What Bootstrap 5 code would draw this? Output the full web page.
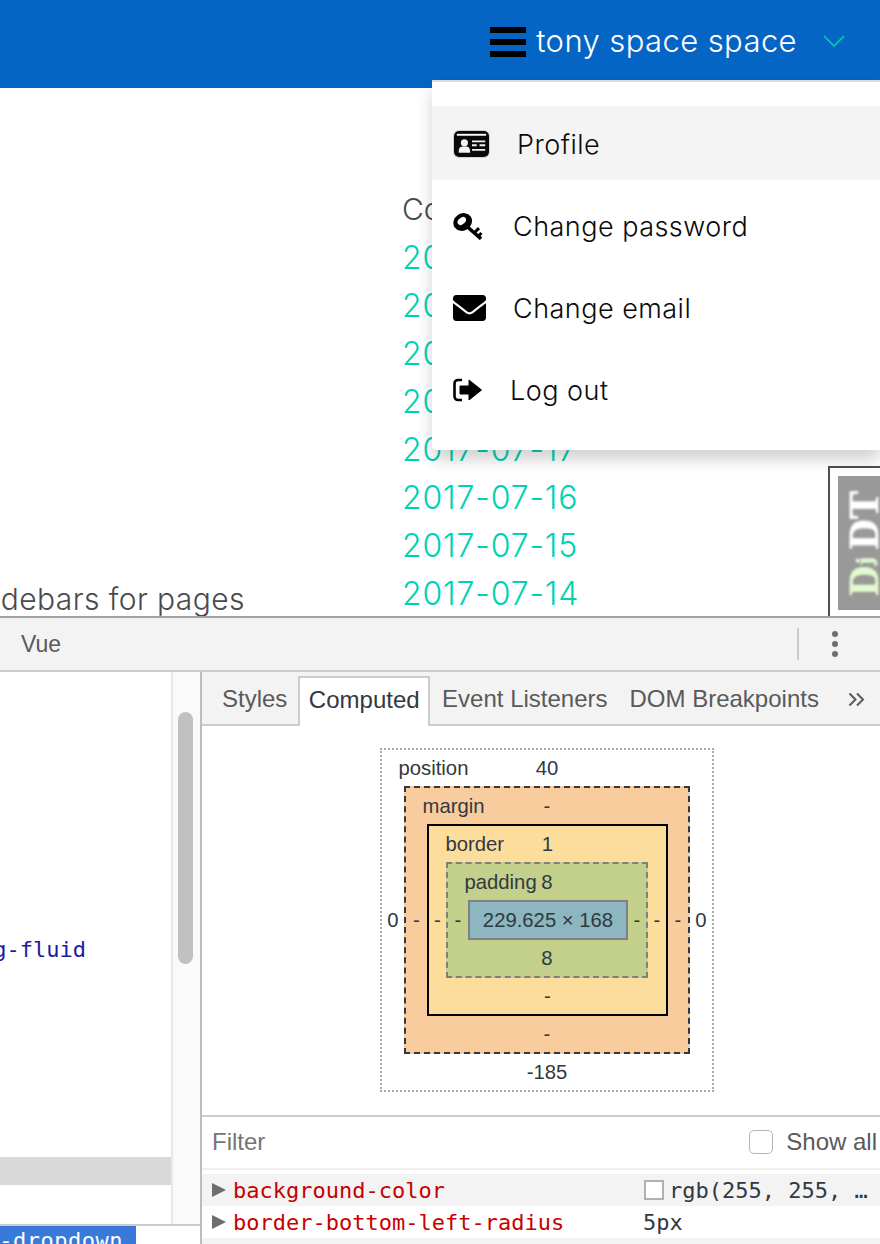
<!DOCTYPE html>
<html lang="en">
<head>
<meta charset="utf-8">
<title>Profile menu and DevTools</title>
<link rel="stylesheet" href="https://cdn.jsdelivr.net/npm/bootstrap@5.3.0/dist/css/bootstrap.min.css">
<style>
html,body{margin:0;height:1244px;overflow:hidden;background:#fff}
body{font-family:"Inter","Liberation Sans",sans-serif}
.shot{height:1244px;width:880px;overflow:hidden}
.pagearea{height:616px;position:relative;overflow:hidden;flex:none}
.topbar{height:88px;background:#0565c4;padding:0;flex:none}
.usernav{padding-right:35px;height:82px;padding-top:0}
.burger{width:36px;height:30px;margin-right:10px;margin-top:2px}
.burger i{display:block;height:6px;background:#000}
.uname{color:#fff;font-size:31px;font-weight:300;letter-spacing:.4px;line-height:1;margin-right:26px;margin-bottom:2px}
.chev{width:22px;height:12px;display:block}
.pgbody{height:528px}
.leftcol{width:245px;margin-right:157px;padding-top:487px;flex:none}
.sidetitle{font-size:30px;font-weight:300;line-height:48px;color:#4a4a4a;white-space:nowrap;letter-spacing:.43px}
.datecol{padding-top:97px;font-size:30px;font-weight:300;line-height:48px}
.datecol .cohead{color:#4a4a4a}
.datecol a{display:block;height:48px;padding-top:1px;color:#00d1b2;text-decoration:none;font-size:32px;letter-spacing:.85px;white-space:nowrap}
.usermenu.dropdown-menu{top:80px;right:0;left:auto;width:448px;margin:0;padding:24px 0;border:0;border-top:2px solid #dbdbdb;border-radius:0 0 0 5px;box-shadow:0 10px 16px rgba(0,0,0,.18);height:370px}
.usermenu .dropdown-item{height:74px;padding:4px 0 0 21px;margin-bottom:8px;font-size:27px;font-weight:300;color:#0a0a0a;letter-spacing:.48px}
.usermenu .dropdown-item.cur{background:#f4f4f4}
.mi{display:block;flex:none;margin-top:-2px}
.mi.card{margin-right:27px}
.mi.keyic{margin-right:30px}
.mi.mailic{margin-right:27px}
.mi.outic{margin-right:28px}
.djhandle{position:absolute;left:828px;top:466px;width:80px;height:160px;background:#fff;border:2px solid #4f4f4f;padding:8px}
.djin{background:#999;height:134px;width:70px;overflow:hidden;display:flex;justify-content:flex-start;align-items:flex-start;padding:15px 0 0 5px}
.djtext{writing-mode:vertical-rl;transform:rotate(180deg);font-family:"Liberation Serif",serif;font-weight:700;font-size:42px;line-height:1;color:#fff;filter:blur(.8px);white-space:nowrap;-webkit-text-stroke:.7px currentColor}
.djtext b{color:#e2fbcf}
.djtext b.jj{font-size:24px;letter-spacing:8px}

.devtools{height:628px;border-top:2px solid #a3a3a3;font-family:"Liberation Sans",sans-serif;color:#303942;flex:none}
.dtbar{height:54px;background:#f3f3f3;border-bottom:2px solid #ccc;flex:none;padding-left:21px;font-size:23px;color:#5a5a5a}
.dtsep{width:2px;height:32px;background:#ccc;margin-left:auto;margin-right:32px}
.dtdots{width:8px;margin-right:41px}
.dtdots i{display:block;width:6px;height:6px;border-radius:50%;background:#6e6e6e;margin:2px 1px}
.dtmain{height:572px}
.elpane{width:200px;flex:none;background:#fff}
.elrows{height:552px;flex:none}
.elcode{width:171px;flex:none;font-family:"DejaVu Sans Mono",monospace;font-size:22px;color:#1a1aa6;overflow:hidden;position:relative;padding-top:265px}
.elline{height:26px;line-height:26px;display:flex;justify-content:flex-end;white-space:nowrap;padding-right:85px}
.elsel{height:28px;background:#d9d9d9;margin-top:194px}
.sbar{width:29px;flex:none;background:#fafafa;border-left:2px solid #e8e8e8;padding:40px 7px 0 5px}
.sthumb{height:252px;background:#c1c1c1;border-radius:8px}
.crumbs{height:20px;border-top:2px solid #ccc;flex:none;overflow:hidden;background:#fff}
.crumbsel{width:136px;height:18px;background:#3879d9;color:#fff;font-family:"DejaVu Sans Mono",monospace;font-size:22px;letter-spacing:.5px;line-height:29px;display:flex;justify-content:flex-end;white-space:nowrap;padding-right:13px;overflow:hidden}
.sidepane{width:680px;flex:none;border-left:2px solid #bdbdbd;background:#fff}
.tabsrow{height:54px;background:#f3f3f3;border-bottom:2px solid #ccc;flex:none;font-size:24px;color:#5a5a5a;padding:4px 0 0 0;align-items:stretch}
.dttab{padding:0 11px;display:flex;align-items:center;white-space:nowrap;height:46px}
.dttab.first{padding-left:20px;padding-right:11px}
.dttab.on{background:#fff;color:#303942;border:2px solid #ccc;border-bottom:0;height:50px;padding:0 8.500px 4px;margin-bottom:-2px;margin-right:1px}
.more{margin-left:18px;width:20px;height:46px}
.bmwrap{height:389px;flex:none;padding:22px 0 0 12px}
.bm{display:grid;grid-template-rows:36px auto 36px;font-size:20.3px;color:#303942;line-height:1}
.bmtop{display:grid;grid-template-columns:1fr auto 1fr;align-items:center;grid-column:1/4}
.bmside{display:flex;align-items:center;justify-content:center}
.bmbot{grid-column:1/4;display:flex;align-items:center;justify-content:center}
.bmpos{grid-template-columns:22px 1fr 22px;width:334px;height:344px;border:2px dotted #aaa}
.bmmar{grid-template-columns:21px 1fr 20px;background:#f9cc9d;border:2px dashed #303942}
.bmbor{grid-template-columns:17px 1fr 18px;background:#fddd9b;border:2px solid #000}
.bmpad{grid-template-columns:20px 1fr 18px;background:#c3d08b;border:2px dashed #808080}
.bmcon{background:#8cb6c0;border:2px solid #808080;height:40px;display:flex;align-items:center;justify-content:center;white-space:nowrap}
.bmlab{padding-left:16.500px;white-space:nowrap;text-align:left}
.filterrow{border-top:2px solid #ccc;flex:none;font-size:24px;color:#757575;padding:0 0 2px 10px;border-bottom:2px solid #eee;height:55px}
.fakecheck{width:24px;height:24px;border:1.5px solid #b5b5b5;border-radius:5px;background:#fff;margin-left:auto;margin-right:13px}
.showall{color:#5a5a5a;margin-right:3px;white-space:nowrap}
.proplist{padding-top:4px;font-family:"DejaVu Sans Mono",monospace;font-size:22px;flex:1;overflow:hidden}
.prop{height:32px;align-items:center;white-space:nowrap}
.prop.alt{background:#f3f3f3}
.tri{width:0;height:0;border-left:14px solid #6e6e6e;border-top:7px solid transparent;border-bottom:7px solid transparent;margin-left:10px;margin-right:7px;flex:none}
.pname{color:#c80000;width:410px;flex:none}
.pval{color:#303942;letter-spacing:0}
.swatch{width:20px;height:20px;border:2px solid #b0b0b0;background:#fff;display:inline-block;margin-left:1px;margin-right:5px;flex:none}
</style>
</head>
<body>
<div class="shot d-flex flex-column">
  <div class="pagearea d-flex flex-column">
    <nav class="navbar topbar align-items-start justify-content-end">
      <div class="usernav d-flex align-items-center">
        <span class="burger d-flex flex-column justify-content-between"><i></i><i></i><i></i></span>
        <span class="uname">tony space space</span>
        <svg class="chev" viewBox="0 0 22 12"><path d="M1 1l10 10L21 1" fill="none" stroke="#00d1b2" stroke-width="1.6"/></svg>
      </div>
    </nav>
    <div class="pgbody d-flex">
      <div class="leftcol d-flex justify-content-end"><div class="sidetitle">Sidebars for pages</div></div>
      <div class="datecol">
        <div class="cohead">Contents</div>
        <a href="#">2017-07-21</a>
        <a href="#">2017-07-20</a>
        <a href="#">2017-07-19</a>
        <a href="#">2017-07-18</a>
        <a href="#">2017-07-17</a>
        <a href="#">2017-07-16</a>
        <a href="#">2017-07-15</a>
        <a href="#">2017-07-14</a>
      </div>
    </div>
    <ul class="dropdown-menu show usermenu list-unstyled">
      <li><a class="dropdown-item cur d-flex align-items-center" href="#">
        <svg class="mi card" width="37" height="28" viewBox="0 0 37 28"><rect width="37" height="28" rx="3" fill="#0a0a0a"/><rect x="3" y="3" width="31" height="2" fill="#fff"/><circle cx="11" cy="12.500" r="3.800" fill="#f2f2f2"/><path d="M5 23v-2c0-3 2-4.500 4-4.500h4c2 0 4 1.500 4 4.500v2z" fill="#f2f2f2"/><path d="M19 11h14M19 15h5M27 15h6M19 20h14" stroke="#f2f2f2" stroke-width="2"/></svg>
        Profile</a></li>
      <li><a class="dropdown-item d-flex align-items-center" href="#">
        <svg class="mi keyic" width="30" height="28" viewBox="0 0 30 28"><ellipse cx="9.700" cy="10" rx="9.700" ry="8.500" transform="rotate(-35 9.700 10)" fill="#000"/><ellipse cx="8.800" cy="9" rx="4.800" ry="3.200" transform="rotate(-40 8.800 9)" fill="#fff"/><path d="M14 14.500L28 26.800" stroke="#000" stroke-width="3.600" fill="none"/><path d="M21 21l5-4.800M25 24.500l3.500-3.500" stroke="#000" stroke-width="3" fill="none"/></svg>
        Change password</a></li>
      <li><a class="dropdown-item d-flex align-items-center" href="#">
        <svg class="mi mailic" width="33" height="26" viewBox="0 64 512 384" preserveAspectRatio="none"><path d="M502.3 190.8c3.900-3.100 9.700-.2 9.700 4.700V400c0 26.500-21.500 48-48 48H48c-26.500 0-48-21.500-48-48V195.600c0-5 5.700-7.800 9.700-4.700 22.400 17.400 52.100 39.500 154.100 113.600 21.100 15.400 56.700 47.800 92.200 47.600 35.700.3 72-32.800 92.300-47.600 102-74.100 131.600-96.300 154-113.700zM256 320c23.200.4 56.600-29.200 73.400-41.400 132.700-96.300 142.800-104.700 173.400-128.700 5.800-4.500 9.200-11.500 9.200-18.900v-19c0-26.500-21.500-48-48-48H48C21.500 64 0 85.500 0 112v19c0 7.400 3.400 14.300 9.200 18.900 30.600 23.900 40.700 32.400 173.400 128.700 16.800 12.200 50.200 41.800 73.400 41.400z" fill="#000"/></svg>
        Change email</a></li>
      <li><a class="dropdown-item d-flex align-items-center" href="#">
        <svg class="mi outic" width="29" height="24" viewBox="0 0 29 24"><path d="M9 2H5a3.500 3.500 0 0 0-3.500 3.500v13A3.500 3.500 0 0 0 5 22h4" fill="none" stroke="#000" stroke-width="2.600"/><path d="M7 8h9V2l12.500 10L16 22v-6H7z" fill="#000" stroke="#000" stroke-width="1" stroke-linejoin="round"/></svg>
        Log out</a></li>
    </ul>
    <div class="djhandle"><div class="djin"><div class="djtext"><b>D</b><b class="jj">j</b>DT</div></div></div>
  </div>

  <div class="devtools d-flex flex-column">
    <div class="dtbar d-flex align-items-center">
      <span>Vue</span>
      <span class="dtsep"></span>
      <span class="dtdots d-flex flex-column"><i></i><i></i><i></i></span>
    </div>
    <div class="dtmain d-flex">
      <div class="elpane d-flex flex-column">
        <div class="elrows d-flex">
          <div class="elcode">
            <div class="elline">img-fluid</div>
            <div class="elsel"></div>
          </div>
          <div class="sbar"><div class="sthumb"></div></div>
        </div>
        <div class="crumbs"><div class="crumbsel">navbar-dropdown</div></div>
      </div>
      <div class="sidepane d-flex flex-column">
        <div class="tabsrow d-flex">
          <div class="dttab first">Styles</div>
          <div class="dttab on">Computed</div>
          <div class="dttab">Event Listeners</div>
          <div class="dttab">DOM Breakpoints</div>
          <div class="more d-flex align-items-center"><svg width="17" height="15" viewBox="0 0 17 15"><path d="M1.500 1.500l6 6-6 6M9 1.500l6 6-6 6" fill="none" stroke="#5a5a5a" stroke-width="2"/></svg></div>
        </div>
        <div class="bmwrap d-flex justify-content-center">
          <div class="bm bmpos">
            <div class="bmtop"><span class="bmlab">position</span><span>40</span><span></span></div>
            <div class="bmside">0</div>
            <div class="bm bmmar">
              <div class="bmtop"><span class="bmlab">margin</span><span>-</span><span></span></div>
              <div class="bmside">-</div>
              <div class="bm bmbor">
                <div class="bmtop"><span class="bmlab">border</span><span>1</span><span></span></div>
                <div class="bmside">-</div>
                <div class="bm bmpad">
                  <div class="bmtop"><span class="bmlab">padding</span><span>8</span><span></span></div>
                  <div class="bmside">-</div>
                  <div class="bmcon">229.625 × 168</div>
                  <div class="bmside">-</div>
                  <div class="bmbot">8</div>
                </div>
                <div class="bmside">-</div>
                <div class="bmbot">-</div>
              </div>
              <div class="bmside">-</div>
              <div class="bmbot">-</div>
            </div>
            <div class="bmside">0</div>
            <div class="bmbot">-185</div>
          </div>
        </div>
        <div class="filterrow d-flex align-items-center">
          <span>Filter</span>
          <span class="fakecheck"></span>
          <span class="showall">Show all</span>
        </div>
        <div class="proplist">
          <div class="prop alt d-flex"><span class="tri"></span><span class="pname">background-color</span><span class="swatch"></span><span class="pval">rgb(255, 255, …</span></div>
          <div class="prop d-flex"><span class="tri"></span><span class="pname">border-bottom-left-radius</span><span class="pval">5px</span></div>
          <div class="prop alt d-flex"></div>
        </div>
      </div>
    </div>
  </div>
</div>
<script src="https://cdn.jsdelivr.net/npm/bootstrap@5.3.0/dist/js/bootstrap.bundle.min.js"></script>
</body>
</html>
